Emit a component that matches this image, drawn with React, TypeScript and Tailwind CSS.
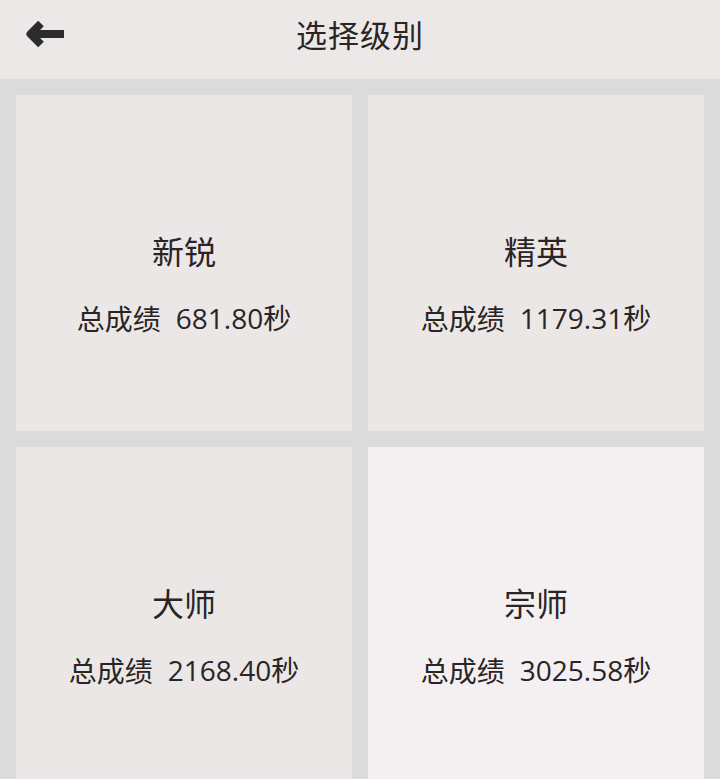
const levels = [
  { name: '新锐', score: '681.80', bg: 'bg-[#ebe7e7]' },
  { name: '精英', score: '1179.31', bg: 'bg-[#ebe7e7]' },
  { name: '大师', score: '2168.40', bg: 'bg-[#ebe7e7]' },
  { name: '宗师', score: '3025.58', bg: 'bg-[#f4eff1]' },
]

export default function App() {
  return (
    <div className="w-[720px] h-[779px] overflow-hidden bg-[#dcdbdc] text-[#2a2425] font-['Noto_Sans_CJK_SC','Noto_Sans',sans-serif]">
      {/* top bar */}
      <div className="relative h-[79px] bg-[#ece8e8] flex items-center justify-center">
        <button className="absolute left-[24px] top-[18px] w-[44px] h-[32px] flex items-center justify-center">
          <svg width="40" height="30" viewBox="0 0 40 30" fill="none">
            <path d="M8 15H38" stroke="#2b2b2b" strokeWidth="8" />
            <path d="M15 4.5L4.5 15L15 25.5" stroke="#2b2b2b" strokeWidth="8" strokeLinejoin="round" />
          </svg>
        </button>
        <h1 className="text-[31px] leading-none -mt-[13px] tracking-[1px]">选择级别</h1>
      </div>

      {/* level grid */}
      <div className="grid grid-cols-2 gap-4 p-4">
        {levels.map(l => (
          <div key={l.name} className={`${l.bg} aspect-square flex flex-col items-center pt-[136px]`}>
            <div className="text-[32px] leading-[38px]">{l.name}</div>
            <div className="mt-[32px] text-[28px] leading-[34px] flex items-center">
              <span>总成绩</span>
              <span className="ml-[15px] font-['Open_Sans','Noto_Sans_CJK_SC',sans-serif]">{l.score}秒</span>
            </div>
          </div>
        ))}
      </div>
    </div>
  )
}
